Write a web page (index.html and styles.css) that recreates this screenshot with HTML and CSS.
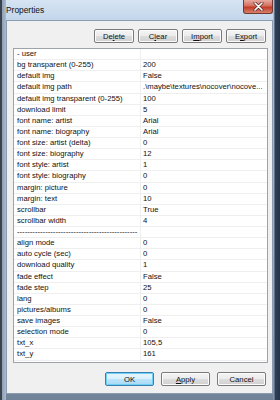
FILE: index.html
```html
<!DOCTYPE html>
<html lang="en">
<head>
    <meta charset="UTF-8">
    <title>Properties</title>
    <link rel="stylesheet" href="styles.css">
</head>
<body>
    <div class="window">
        <div class="titlebar">
            <span class="title">Properties</span>
            <button class="close">
                <svg width="11" height="9" viewBox="0 0 11 9">
                    <path d="M2 1 L9 8 M9 1 L2 8" stroke="#5a2a24" stroke-width="3" stroke-linecap="round"/>
                    <path d="M2 1 L9 8 M9 1 L2 8" stroke="#fff" stroke-width="1.6" stroke-linecap="round"/>
                </svg>
            </button>
        </div>
        <div class="client">
            <div class="toolbar">
                <button class="btn">De<u>l</u>ete</button>
                <button class="btn">C<u>l</u>ear</button>
                <button class="btn">I<u>m</u>port</button>
                <button class="btn">E<u>x</u>port</button>
            </div>
            <div class="list">
                <div class="row"><span class="key">- user</span><span class="val"></span></div>
                <div class="row"><span class="key">bg transparent (0-255)</span><span class="val">200</span></div>
                <div class="row"><span class="key">default img</span><span class="val">False</span></div>
                <div class="row"><span class="key">default img path</span><span class="val">.\maybe\textures\nocover\nocove...</span></div>
                <div class="row"><span class="key">default img transparent (0-255)</span><span class="val">100</span></div>
                <div class="row"><span class="key">download limit</span><span class="val">5</span></div>
                <div class="row"><span class="key">font name: artist</span><span class="val">Arial</span></div>
                <div class="row"><span class="key">font name: biography</span><span class="val">Arial</span></div>
                <div class="row"><span class="key">font size: artist (delta)</span><span class="val">0</span></div>
                <div class="row"><span class="key">font size: biography</span><span class="val">12</span></div>
                <div class="row"><span class="key">font style: artist</span><span class="val">1</span></div>
                <div class="row"><span class="key">font style: biography</span><span class="val">0</span></div>
                <div class="row"><span class="key">margin: picture</span><span class="val">0</span></div>
                <div class="row"><span class="key">margin: text</span><span class="val">10</span></div>
                <div class="row"><span class="key">scrollbar</span><span class="val">True</span></div>
                <div class="row"><span class="key">scrollbar width</span><span class="val">4</span></div>
                <div class="row"><span class="key">-----------------------------------------------</span><span class="val"></span></div>
                <div class="row"><span class="key">align mode</span><span class="val">0</span></div>
                <div class="row"><span class="key">auto cycle (sec)</span><span class="val">0</span></div>
                <div class="row"><span class="key">download quality</span><span class="val">1</span></div>
                <div class="row"><span class="key">fade effect</span><span class="val">False</span></div>
                <div class="row"><span class="key">fade step</span><span class="val">25</span></div>
                <div class="row"><span class="key">lang</span><span class="val">0</span></div>
                <div class="row"><span class="key">pictures/albums</span><span class="val">0</span></div>
                <div class="row"><span class="key">save images</span><span class="val">False</span></div>
                <div class="row"><span class="key">selection mode</span><span class="val">0</span></div>
                <div class="row"><span class="key">txt_x</span><span class="val">105,5</span></div>
                <div class="row"><span class="key">txt_y</span><span class="val">161</span></div>
            </div>
            <div class="footer">
                <button class="btn wide default">OK</button>
                <button class="btn wide"><u>A</u>pply</button>
                <button class="btn wide">Cancel</button>
            </div>
        </div>
    </div>
</body>
</html>
```
FILE: styles.css
```css
body {
    margin: 0;
    font-family: "Liberation Sans", Arial, sans-serif;
    background: #2c3a4a;
}
.window {
    width: 280px;
    height: 400px;
    box-sizing: border-box;
    padding: 0 7px 6px 6px;
    display: flex;
    flex-direction: column;
    background:
        linear-gradient(to right, #3a4350 0, #3a4350 2px, #8f9fb1 2px, #a9bbd0 6px, transparent 6px),
        linear-gradient(to left, #24344a 0, #2e4058 5px, #8ea2b8 6px, transparent 7px),
        linear-gradient(#d6e4f3, #c3d6ea 20px, #aabed4 60%, #6f8298);
    background-repeat: no-repeat;
    background-size: 100% 100%;
}
.titlebar {
    height: 20px;
    display: flex;
    justify-content: space-between;
    align-items: flex-start;
}
.title {
    font-size: 8.4px;
    color: #111;
    margin-top: 5px;
}
.close {
    width: 30px;
    height: 14px;
    padding: 0;
    border: 1px solid #6e3a33;
    border-top: none;
    border-radius: 0 0 3px 3px;
    background: linear-gradient(#e8aaa0, #d46e5e 45%, #c23c26 55%, #d8806c);
    display: flex;
    align-items: center;
    justify-content: center;
}
.client {
    flex: 1;
    background: #f0f0f0;
    border: 1px solid #8c9cb0;
    display: flex;
    flex-direction: column;
}
.toolbar {
    display: flex;
    justify-content: flex-end;
    gap: 4px;
    padding: 8px 6px 0 0;
}
.btn {
    width: 40px;
    height: 14px;
    padding: 0;
    font-family: "Liberation Sans", Arial, sans-serif;
    font-size: 7.7px;
    color: #111;
    border: 1px solid #7a7a7a;
    border-radius: 2px;
    background: linear-gradient(#f4f4f4, #ebebeb 50%, #dddddd 50%, #d0d0d0);
    box-shadow: inset 0 0 0 1px #fcfcfc;
}
.btn.wide {
    width: 49px;
}
.btn.default {
    border-color: #3c7fb1;
    box-shadow: inset 0 0 0 1px #6dd0f4;
    background: linear-gradient(#eaf6fd, #d9f0fc 50%, #bee6fd 50%, #a7d9f5);
}
.list {
    margin: 5px 4px 0 6px;
    height: 315px;
    box-sizing: border-box;
    border: 1px solid #9ea3aa;
    background: #fff;
    overflow: hidden;
}
.row {
    display: grid;
    grid-template-columns: 127px 1fr;
    height: 11.13px;
    box-sizing: border-box;
    border-bottom: 1px solid #efefef;
    font-size: 7.7px;
    line-height: 10px;
    color: #111;
}
.key {
    padding-left: 3px;
    border-right: 1px solid #efefef;
    white-space: nowrap;
    overflow: hidden;
}
.val {
    padding-left: 2px;
    white-space: nowrap;
    overflow: hidden;
}
.footer {
    display: flex;
    justify-content: flex-end;
    gap: 7px;
    padding: 9px 6px 0 0;
}
```
